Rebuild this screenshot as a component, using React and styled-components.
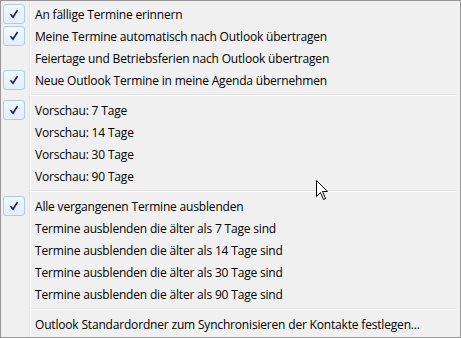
import React from "react";
import styled, { createGlobalStyle } from "styled-components";

const GlobalStyle = createGlobalStyle`
  html, body { margin: 0; padding: 0; background: #f0f0f0; }
  body { font-family: "Open Sans", "Noto Sans", sans-serif; }
`;

// gutter line drawn into the background, like the Win7 menu
const Menu = styled.div`
  position: relative;
  box-sizing: border-box;
  width: 461px;
  height: 338px;
  border: 1px solid #979797;
  background: linear-gradient(
    to right,
    #f0f0f0 28px,
    #e2e3e3 28px 29px,
    #ffffff 29px 30px,
    #f0f0f0 30px
  );
  padding: 2px;
  display: flex;
  flex-direction: column;
  overflow: hidden;
`;

const Item = styled.div`
  display: flex;
  align-items: center;
  gap: 10px;
  height: 22px;
  font-size: 12px;
  letter-spacing: -0.18px;
  color: #000;
  white-space: nowrap;
`;

const IconCell = styled.div`
  box-sizing: border-box;
  width: 22px;
  height: 20px;
  display: flex;
  align-items: center;
  justify-content: center;
  border: 1px solid ${(p) => (p.$checked ? "#aeccf0" : "transparent")};
  border-radius: 3px;
  background: ${(p) => (p.$checked ? "linear-gradient(#f2f7fe, #e3eefc)" : "none")};
`;

const Separator = styled.div`
  height: 8px;
  display: flex;
  align-items: center;
  margin-left: 28px;
  &::before {
    content: "";
    flex: 1;
    height: 1px;
    background: #e0e0e0;
    border-bottom: 1px solid #ffffff;
  }
`;

const Cursor = styled.svg`
  position: absolute;
  left: 315px;
  top: 179px;
`;

const Check = () => (
  <svg width="10" height="10" viewBox="0 0 10 10">
    <path d="M1.5 5.2 L4 8.2 L8.6 1" fill="none" stroke="#0c1a75" strokeWidth="1.6" />
  </svg>
);

const groups = [
  [
    ["An fällige Termine erinnern", true],
    ["Meine Termine automatisch nach Outlook übertragen", true],
    ["Feiertage und Betriebsferien nach Outlook übertragen", false],
    ["Neue Outlook Termine in meine Agenda übernehmen", true],
  ],
  [
    ["Vorschau: 7 Tage", true],
    ["Vorschau: 14 Tage", false],
    ["Vorschau: 30 Tage", false],
    ["Vorschau: 90 Tage", false],
  ],
  [
    ["Alle vergangenen Termine ausblenden", true],
    ["Termine ausblenden die älter als 7 Tage sind", false],
    ["Termine ausblenden die älter als 14 Tage sind", false],
    ["Termine ausblenden die älter als 30 Tage sind", false],
    ["Termine ausblenden die älter als 90 Tage sind", false],
  ],
  [["Outlook Standardordner zum Synchronisieren der Kontakte festlegen...", false]],
];

export default function App() {
  return (
    <>
      <GlobalStyle />
      <Menu>
        {groups.map((group, gi) => (
          <React.Fragment key={gi}>
            {gi > 0 && <Separator />}
            {group.map(([label, checked]) => (
              <Item key={label}>
                <IconCell $checked={checked}>{checked && <Check />}</IconCell>
                <span>{label}</span>
              </Item>
            ))}
          </React.Fragment>
        ))}
        <Cursor width="14" height="22" viewBox="0 0 14 22">
          <path
            d="M0.5 0.5 L0.5 16.5 L4.5 12.5 L7.5 19.5 L9.5 18.5 L6.5 11.5 L11.5 11.5 Z"
            fill="#ffffff"
            stroke="#000000"
            strokeWidth="1"
          />
        </Cursor>
      </Menu>
    </>
  );
}
